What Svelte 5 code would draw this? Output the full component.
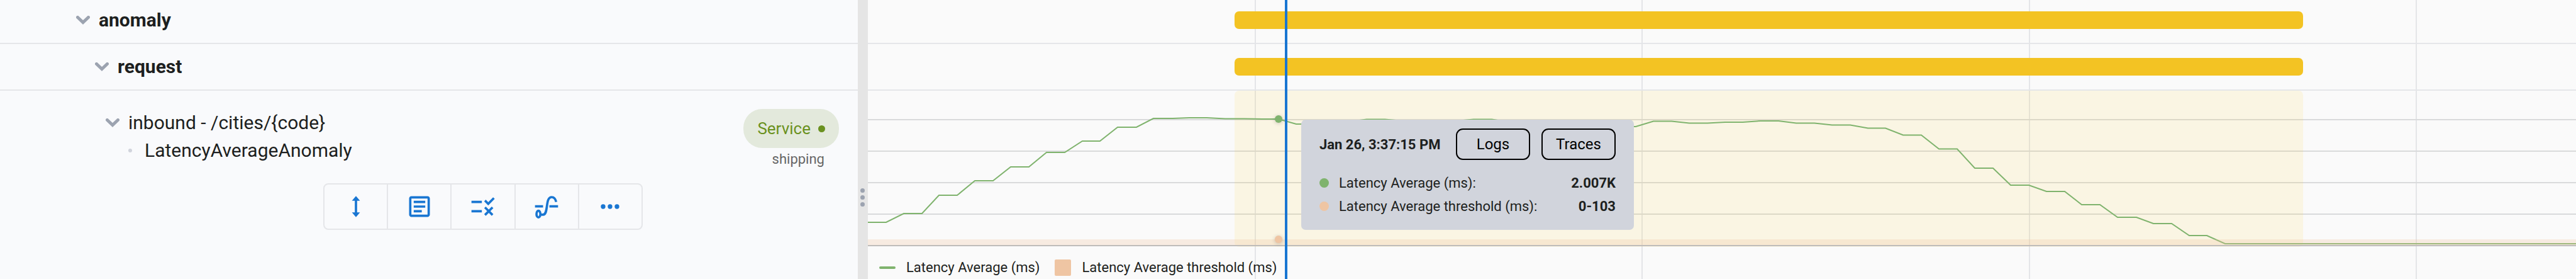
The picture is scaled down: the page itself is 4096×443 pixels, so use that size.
<script>
  const spans = [
    { from: 21.47, size: 62.56 },
    { from: 21.47, size: 62.56 },
  ];
  const ticks = [616, 1231, 1847, 2462];
  const levels = [190, 240, 290, 340];
  const points = [
    [0, 353], [29, 353], [57, 339], [86, 339], [113, 310], [142, 310], [170, 287], [199, 287],
    [227, 265], [256, 265], [284, 242], [313, 242], [341, 224], [369, 224], [397, 202], [427, 202],
    [454, 188], [485, 188], [511, 187], [539, 187], [568, 188.5], [598, 188.5], [627, 189], [653, 189],
    [681, 197], [708, 197], [737, 193], [766, 193], [793, 189.5], [822, 189.5], [851, 192], [936, 192],
    [963, 189.5], [992, 189.5], [1021, 194], [1193, 201], [1221, 201], [1249, 192.5], [1278, 192.5],
    [1306, 195.5], [1335, 195.5], [1363, 194], [1391, 194], [1419, 192], [1448, 192], [1476, 195.5],
    [1505, 195.5], [1533, 198.5], [1562, 198.5], [1590, 203.5], [1618, 203.5], [1646, 214.5], [1675, 214.5],
    [1703, 236.5], [1732, 236.5], [1760, 267], [1789, 267], [1817, 294], [1846, 294], [1874, 304],
    [1903, 304], [1930, 325], [1959, 325], [1987, 345], [2017, 345], [2044, 355], [2073, 355],
    [2101, 374], [2129, 374], [2158, 387], [2716, 387],
  ];
  const plotTop = 144;
  const path = points.map(([x, y]) => `${x},${y - plotTop}`).join(' ');
  const readings = [
    { name: 'Latency Average (ms):', value: '2.007K', tone: 'green' },
    { name: 'Latency Average threshold (ms):', value: '0-103', tone: 'peach' },
  ];
</script>

{#snippet chevron()}
  <svg class="chevron" viewBox="0 0 22 14" aria-hidden="true"><path d="M2.500 2.500 11 10.500l8.500-8" /></svg>
{/snippet}

<main>
  <section class="tree" aria-label="Anomalies">
    <div class="row level1"><button class="toggle" aria-label="Toggle anomaly">{@render chevron()}</button><strong>anomaly</strong></div>
    <div class="row level2"><button class="toggle" aria-label="Toggle request">{@render chevron()}</button><strong>request</strong></div>
    <div class="detail">
      <div class="summary">
        <div class="names">
          <div class="line"><button class="toggle" aria-label="Toggle inbound">{@render chevron()}</button><span>inbound - /cities/&#123;code&#125;</span></div>
          <div class="line child"><i class="bullet"></i><span>LatencyAverageAnomaly</span></div>
        </div>
        <div class="entity">
          <span class="chip">Service<i></i></span>
          <span class="owner">shipping</span>
        </div>
      </div>
      <div class="tools" role="toolbar">
        <button aria-label="Resize"><svg viewBox="0 0 24 24"><path d="M11 7H8.500L12 2.800l3.500 4.200H13v10h2.500L12 21.200 8.500 17H11z" /></svg></button>
        <button aria-label="Details"><svg viewBox="0 0 24 24"><path d="M19 5v14H5V5h14m0-2H5c-1.100 0-2 .9-2 2v14c0 1.100.9 2 2 2h14c1.100 0 2-.9 2-2V5c0-1.100-.9-2-2-2zm-5 14H7v-2h7v2zm3-4H7v-2h10v2zm0-4H7V7h10v2z" /></svg></button>
        <button aria-label="Rules"><svg viewBox="0 0 24 24"><path d="M16.540 11 13 7.460l1.410-1.410 2.120 2.120 4.240-4.240 1.410 1.410L16.540 11zM11 7H2v2h9V7zm10 6.410L19.590 12 17 14.590 14.410 12 13 13.410 15.590 16 13 18.590 14.410 20 17 17.410 19.590 20 21 18.590 18.410 16 21 13.410zM11 15H2v2h9v-2z" /></svg></button>
        <button aria-label="Baseline"><svg viewBox="0 0 24 24"><path class="stroke" d="M2 11.800h7M14.500 11.800H22M20.400 8C19.800 5.500 18.500 3.800 16.500 3.800 10.500 3.800 14 19 9 19H7.500" /><ellipse class="stroke" cx="5" cy="18.500" rx="1.700" ry="2.900" /></svg></button>
        <button aria-label="More"><svg viewBox="0 0 24 24"><circle cx="6" cy="12" r="2" /><circle cx="12" cy="12" r="2" /><circle cx="18" cy="12" r="2" /></svg></button>
      </div>
    </div>
  </section>

  <div class="splitter" role="separator" aria-orientation="vertical"><i></i><i></i><i></i></div>

  <section class="timeline" aria-label="Timeline">
    <svg class="ticks" viewBox="0 0 2716 443" preserveAspectRatio="none" aria-hidden="true">
      {#each ticks as x}<path d="M{x} 0V443" />{/each}
    </svg>
    {#each spans as span}
      <div class="row"><div class="span" style="margin-left: {span.from}%; width: {span.size}%"></div></div>
    {/each}
    <div class="plot">
      <svg viewBox="0 0 2716 248" preserveAspectRatio="none" role="img" aria-label="Latency Average (ms)">
        {#each levels as y}<path class="level" d="M0 {y - plotTop}H2716" />{/each}
        <rect class="window" x="583" y="0" width="1699" height="248" rx="7" />
        <polyline class="series" points={path} />
        <rect class="band" x="0" y="236" width="2716" height="10" />
        <path class="axis" d="M0 246H2716" />
      </svg>
      <i class="mark high"></i>
      <i class="mark low"></i>
      <div class="tooltip" role="tooltip">
        <header><strong>Jan 26, 3:37:15 PM</strong><button>Logs</button><button>Traces</button></header>
        <dl>
          {#each readings as r}
            <div><dt><i class={r.tone}></i>{r.name}</dt><dd>{r.value}</dd></div>
          {/each}
        </dl>
      </div>
    </div>
    <div class="legend">
      <span><i class="dash"></i>Latency Average (ms)</span>
      <span><i class="swatch"></i>Latency Average threshold (ms)</span>
    </div>
    <div class="cursor"></div>
  </section>
</main>

<style>
  :global(body) { margin: 0; background: #fafafa; }
  main { display: flex; min-height: 100vh; overflow: hidden; font-family: Roboto, sans-serif; color: #1d1f20; }
  * { box-sizing: border-box; }
  button { font: inherit; color: inherit; background: none; border: 0; padding: 0; cursor: pointer; }
  i { display: block; flex: none; }
  .tree { flex: 0 0 33.3%; background: #f9fafc; font-size: 30px; line-height: 44px; }
  .row { display: flex; align-items: center; box-sizing: content-box; border-bottom: 2px solid #e5e6e9; height: 72px; }
  .row:first-of-type { height: 64px; padding-bottom: 4px; }
  .row strong { font-weight: 700; }
  .level1 { padding-left: 121px; }
  .level2 { padding-left: 151px; }
  .toggle { display: flex; margin-right: 14px; }
  .chevron { width: 22px; height: 14px; fill: none; stroke: #9ca3b0; stroke-width: 5; stroke-linecap: round; stroke-linejoin: miter; }
  .detail { padding-top: 29px; }
  .summary { display: flex; justify-content: space-between; padding-right: 30px; }
  .names { padding-left: 168px; }
  .line { display: flex; align-items: center; }
  .child { padding-left: 36px; gap: 20px; }
  .bullet { width: 6px; height: 6px; border-radius: 50%; background: #d1d4dc; }
  .entity { display: flex; flex-direction: column; align-items: flex-end; }
  .chip { display: flex; align-items: center; gap: 12px; height: 62px; padding: 0 22px; border-radius: 30px; background: #e3e9dc; color: #6a9120; font-size: 26px; }
  .chip i { width: 11px; height: 11px; border-radius: 50%; background: currentColor; }
  .owner { font-size: 22px; line-height: 36px; padding-right: 23px; color: #666; }
  .tools { display: flex; width: 508px; height: 74px; margin: 20px 0 0 514px; border: 2px solid #e5e6e9; border-radius: 8px; }
  .tools button { flex: 1; display: grid; place-items: center; border-right: 2px solid #e5e6e9; }
  .tools button:last-child { border-right: 0; }
  .tools svg { width: 44px; height: 44px; fill: #1976d2; }
  .tools .stroke { fill: none; stroke: #1976d2; stroke-width: 2; }
  .splitter { flex: 0 0 16px; display: flex; flex-direction: column; align-items: center; justify-content: center; gap: 4px; padding-top: 184px; background: #e5e5e5; }
  .splitter i { width: 7px; height: 7px; border-radius: 50%; background: #9ca3b0; }
  .timeline { flex: 1; min-width: 0; position: relative; background: #fafafa; }
  .ticks { position: absolute; inset: 0; width: 100%; height: 100%; }
  .ticks path { stroke: #e4e5e8; stroke-width: 2; vector-effect: non-scaling-stroke; }
  .span { position: relative; height: 28px; border-radius: 7px; background: #f3c323; }
  .plot { position: relative; height: 248px; }
  .plot > svg { display: block; width: 100%; height: 248px; }
  .plot path, .plot polyline { fill: none; stroke-width: 2; vector-effect: non-scaling-stroke; }
  .level { stroke: #d9dadb; }
  .window { fill: #ffcc1c; fill-opacity: .1; }
  .series { stroke: #7fb36d; }
  .band { fill: #efc5a3; fill-opacity: .28; }
  .axis { stroke: #bfbcba; }
  .mark { position: absolute; left: calc(24.050% - 6px); width: 12px; height: 12px; border-radius: 50%; box-shadow: 0 1px 6px #0003; }
  .high { top: 39px; background: #7fb36d; }
  .low { top: 230px; background: #efc5a3; }
  .tooltip { position: absolute; left: 25.370%; top: 46px; width: 529px; padding: 14px 29px 19px; border-radius: 7px; background: #d1d4dc; font-size: 22px; line-height: 37px; }
  header { display: flex; align-items: center; justify-content: space-between; gap: 18px; white-space: nowrap; }
  header strong { flex: 1; }
  header button { width: 118px; height: 50px; border: 2px solid #000; border-radius: 11px; color: #000; font-size: 24px; }
  dl { margin: 18px 0 0; }
  dl div { display: flex; justify-content: space-between; }
  dt { display: flex; align-items: center; gap: 16px; }
  dt i { width: 15px; height: 15px; border-radius: 50%; }
  .green { background: #7fb36d; }
  .peach { background: #efc5a3; }
  dd { margin: 0; font-weight: 700; }
  .legend { position: relative; display: flex; align-items: center; gap: 24px; padding: 15px 0 0 18px; font-size: 22px; line-height: 36px; white-space: nowrap; }
  .legend span { display: flex; align-items: center; gap: 17px; }
  .dash { width: 26px; height: 4px; border-radius: 2px; background: #7fb36d; }
  .swatch { width: 26px; height: 26px; border-radius: 2px; background: #efc5a3; }
  .cursor { position: absolute; left: 24.410%; top: 0; bottom: 0; width: 4px; background: #1976d2; }
</style>
